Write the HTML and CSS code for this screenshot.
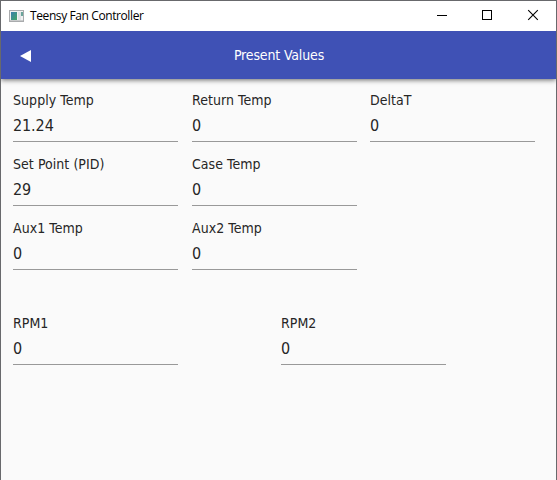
FILE: index.html
```html
<!DOCTYPE html>
<html lang="en">
<head>
<meta charset="utf-8">
<title>Teensy Fan Controller</title>
<link rel="stylesheet" href="styles.css">
</head>
<body>
<div class="window">
  <header class="titlebar">
    <svg class="app-icon" width="15" height="12" viewBox="0 0 15 12" shape-rendering="crispEdges">
      <defs><linearGradient id="screen" x1="0" y1="0" x2="1" y2="1"><stop offset="0" stop-color="#3b7fae"/><stop offset="1" stop-color="#43a566"/></linearGradient></defs>
      <rect width="15" height="12" fill="#a9abad"/>
      <rect x="1" y="1" width="13" height="9" fill="#f2f2f2"/>
      <rect x="2" y="2" width="6" height="8" fill="url(#screen)"/>
      <rect x="9" y="2" width="3" height="8" fill="#dfe3e5"/>
      <rect x="12" y="2" width="2" height="4" fill="#6ba59b"/>
      <rect x="1" y="10" width="13" height="1" fill="#c9cbcc"/>
    </svg>
    <span class="title">Teensy Fan Controller</span>
    <div class="controls">
      <svg width="46" height="30" viewBox="0 0 46 30" shape-rendering="crispEdges"><path d="M18 14.500h10" stroke="#000"/></svg>
      <svg width="45" height="30" viewBox="0 0 45 30" shape-rendering="crispEdges"><path d="M17.500 9.500h9v9h-9z" fill="none" stroke="#000"/></svg>
      <svg width="46" height="30" viewBox="0 0 46 30"><path d="M18.200 9.200l9.600 9.600M27.800 9.200l-9.600 9.600" stroke="#000" stroke-width="1.100"/></svg>
    </div>
  </header>
  <nav class="toolbar">
    <svg class="back" width="11" height="12" viewBox="0 0 11 12"><path d="M0 6L11 0v12z" fill="#fff"/></svg>
    <h1>Present Values</h1>
  </nav>
  <main>
    <section class="grid temps">
      <div class="field"><label>Supply Temp</label><div class="value">21.24</div></div>
      <div class="field"><label>Return Temp</label><div class="value">0</div></div>
      <div class="field"><label>DeltaT</label><div class="value">0</div></div>
      <div class="field"><label>Set Point (PID)</label><div class="value">29</div></div>
      <div class="field"><label>Case Temp</label><div class="value">0</div></div>
      <div></div>
      <div class="field"><label>Aux1 Temp</label><div class="value">0</div></div>
      <div class="field"><label>Aux2 Temp</label><div class="value">0</div></div>
    </section>
    <section class="grid fans">
      <div class="field"><label>RPM1</label><div class="value">0</div></div>
      <div class="field"><label>RPM2</label><div class="value">0</div></div>
    </section>
  </main>
</div>
</body>
</html>
```

FILE: styles.css
```css
* { box-sizing: border-box; }
body { margin: 0; }
.window {
  height: 480px;
  overflow: hidden;
  border: 1px solid #68696c;
  border-bottom: 0;
  background: #fafafa;
  color: #262626;
  font-family: "DejaVu Sans Condensed", "Noto Sans", sans-serif;
}
.titlebar {
  display: flex;
  align-items: center;
  position: relative;
  z-index: 1;
  height: 30px;
  padding-left: 8px;
  background: #fff;
}
.title {
  margin-left: 6px;
  color: #000;
  font: 12px/30px "Open Sans", sans-serif;
  letter-spacing: -0.4px;
}
.controls { display: flex; margin-left: auto; }
.controls svg { display: block; }
.toolbar {
  display: flex;
  align-items: center;
  height: 48px;
  padding: 2px 18px 0 19px;
  background: #3f51b5;
  box-shadow: 0 1px 5px rgba(0, 0, 0, 0.6);
}
.toolbar h1 {
  flex: 1;
  margin: 0 11px 0 0;
  color: #fff;
  font-size: 14px;
  line-height: 20px;
  font-weight: 400;
  letter-spacing: -0.15px;
  text-align: center;
  padding-bottom: 2px;
}
main { padding: 11px 12px; }
.grid { display: grid; grid-auto-rows: 64px; }
.temps { grid-template-columns: 179px 178px 165px; }
.fans { grid-template-columns: 268px 165px; margin-top: 31px; }
.field { width: 165px; height: 52px; border-bottom: 1px solid #999; }
.field label {
  display: block;
  font-size: 14px;
  line-height: 20px;
  letter-spacing: 0.05px;
}
.value { padding-top: 4px; font-size: 16px; line-height: 24px; letter-spacing: -0.1px; }
```
